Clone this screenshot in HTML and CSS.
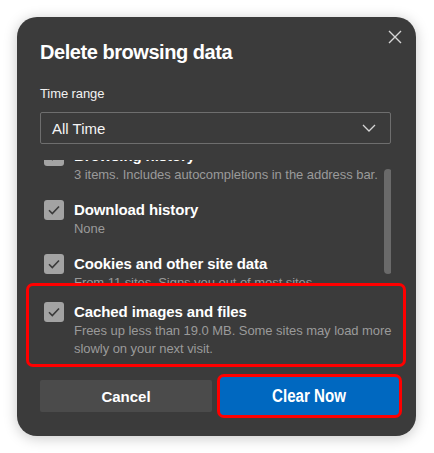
FILE: index.html
```html
<!DOCTYPE html>
<html lang="en">
<head>
<meta charset="utf-8">
<title>Delete browsing data</title>
<link rel="stylesheet" href="styles.css">
</head>
<body>
<div class="dialog">
  <button class="close" aria-label="Close">
    <svg width="14" height="14" viewBox="0 0 14 14"><path d="M1 1L13 13M13 1L1 13" stroke="#d6d6d6" stroke-width="1.4" fill="none"/></svg>
  </button>
  <h1 class="title">Delete browsing data</h1>
  <div class="label">Time range</div>
  <div class="select">
    <span>All Time</span>
    <svg width="14" height="8" viewBox="0 0 14 8"><path d="M1 1L7 7L13 1" stroke="#d6d6d6" stroke-width="1.3" fill="none"/></svg>
  </div>
  <div class="viewport">
    <div class="list">
      <div class="item">
        <span class="check"><svg width="12" height="10" viewBox="0 0 12 10"><path d="M1 5.2L4.3 8.5L11 1.5" stroke="#3a3a3a" stroke-width="1.6" fill="none"/></svg></span>
        <div class="text">
          <div class="name">Browsing history</div>
          <div class="desc">3 items. Includes autocompletions in the address bar.</div>
        </div>
      </div>
      <div class="item">
        <span class="check"><svg width="12" height="10" viewBox="0 0 12 10"><path d="M1 5.2L4.3 8.5L11 1.5" stroke="#3a3a3a" stroke-width="1.6" fill="none"/></svg></span>
        <div class="text">
          <div class="name">Download history</div>
          <div class="desc">None</div>
        </div>
      </div>
      <div class="item">
        <span class="check"><svg width="12" height="10" viewBox="0 0 12 10"><path d="M1 5.2L4.3 8.5L11 1.5" stroke="#3a3a3a" stroke-width="1.6" fill="none"/></svg></span>
        <div class="text">
          <div class="name">Cookies and other site data</div>
          <div class="desc">From 11 sites. Signs you out of most sites.</div>
        </div>
      </div>
    </div>
    <div class="scrollbar"></div>
  </div>
  <div class="highlight">
    <div class="item">
      <span class="check"><svg width="12" height="10" viewBox="0 0 12 10"><path d="M1 5.2L4.3 8.5L11 1.5" stroke="#3a3a3a" stroke-width="1.6" fill="none"/></svg></span>
      <div class="text">
        <div class="name">Cached images and files</div>
        <div class="desc">Frees up less than 19.0 MB. Some sites may load more slowly on your next visit.</div>
      </div>
    </div>
  </div>
  <div class="actions">
    <button class="btn cancel">Cancel</button>
    <button class="btn clear"><span class="narrow">Clear Now</span></button>
  </div>
</div>
</body>
</html>
```

FILE: styles.css
```css
* { box-sizing: border-box; }
html, body { margin: 0; padding: 0; background: #ffffff; }
body {
  font-family: "Liberation Sans", Arial, sans-serif;
  width: 434px;
  height: 453px;
  overflow: hidden;
}
.dialog {
  position: relative;
  margin: 17px 0 0 17px;
  width: 399px;
  height: 419px;
  background: #3b3b3b;
  border-radius: 20px;
  box-shadow: 0 2px 14px rgba(0,0,0,0.22);
  padding: 23px 25px 0 23px;
  color: #ffffff;
}
.close {
  position: absolute;
  top: 12px;
  right: 13px;
  width: 16px;
  height: 16px;
  padding: 1px;
  border: 0;
  background: transparent;
  display: flex;
  align-items: center;
  justify-content: center;
}
.title {
  margin: 0;
  font-size: 20px;
  line-height: 24px;
  font-weight: 700;
  letter-spacing: -0.45px;
}
.label {
  margin-top: 22px;
  font-size: 13px;
  line-height: 16px;
  color: #f2f2f2;
  letter-spacing: -0.1px;
}
.select {
  margin-top: 10px;
  height: 32px;
  border: 1px solid #6e6e6e;
  border-radius: 2px;
  display: flex;
  align-items: center;
  justify-content: space-between;
  padding: 0 14px 0 11px;
  font-size: 15px;
  color: #f4f4f4;
}
.viewport {
  margin-top: 16px;
  height: 123px;
  overflow: hidden;
  display: flex;
  align-items: flex-start;
}
.list {
  flex: 1;
  margin-top: -14px;
  display: flex;
  flex-direction: column;
  gap: 16px;
}
.scrollbar {
  flex: none;
  width: 8px;
  height: 105px;
  margin-top: 9px;
  margin-right: -1px;
  border-radius: 4px;
  background: #6a6a6a;
}
.item {
  display: flex;
  align-items: flex-start;
  gap: 10px;
  padding-left: 4px;
}
.check {
  flex: none;
  width: 20px;
  height: 20px;
  border-radius: 3px;
  background: #a3a3a3;
  display: flex;
  align-items: center;
  justify-content: center;
}
.name {
  font-size: 15px;
  line-height: 20px;
  font-weight: 700;
  letter-spacing: -0.1px;
}
.desc {
  font-size: 13px;
  line-height: 18px;
  color: #9a9a9a;
  letter-spacing: -0.05px;
}
.highlight {
  margin: 0 -15px 0 -14px;
  height: 84px;
  border: 3px solid #ff0000;
  border-radius: 7px;
  padding: 16px 0 0 11px;
}
.actions {
  margin-top: 7px;
  margin-right: -11px;
  display: flex;
  align-items: center;
  gap: 5px;
}
.btn {
  flex: none;
  border: 0;
  font-family: "Liberation Sans", Arial, sans-serif;
  font-weight: 700;
  color: #ffffff;
  cursor: pointer;
}
.cancel {
  width: 172px;
  height: 32px;
  background: #4b4b4b;
  border-radius: 2px;
  font-size: 15px;
}
.clear {
  width: 185px;
  height: 44px;
  background: #0068c0;
  border: 3px solid #ff0000;
  border-radius: 7px;
  font-size: 18px;
  padding: 0;
}
.narrow {
  display: inline-block;
  transform: scaleX(0.84);
}
```
